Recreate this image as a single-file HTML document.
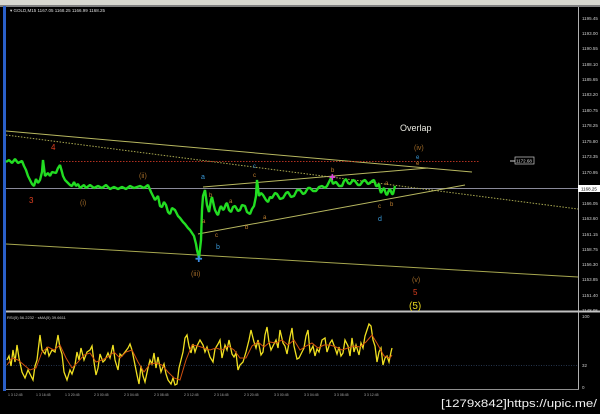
<!DOCTYPE html>
<html><head><meta charset="utf-8"><style>
html,body{margin:0;padding:0;background:#000;width:600px;height:414px;overflow:hidden}
svg{display:block}
text{font-family:"Liberation Sans",sans-serif}
</style></head><body>
<svg width="600" height="414" viewBox="0 0 600 414" xmlns="http://www.w3.org/2000/svg">
<rect width="600" height="414" fill="#000"/>
<rect x="0" y="0" width="600" height="5" fill="#d8d8d0"/>
<rect x="0" y="5" width="600" height="2" fill="#808080"/>
<rect x="3" y="6" width="3" height="385" fill="#2a5fc8"/>
<line x1="578.5" y1="7" x2="578.5" y2="390" stroke="#b0b0b0" stroke-width="1"/>
<line x1="6" y1="311.5" x2="600" y2="311.5" stroke="#c0c0c0" stroke-width="2"/>
<line x1="6" y1="389.5" x2="579" y2="389.5" stroke="#909090" stroke-width="1"/>
<text x="10" y="12" font-size="4.5" fill="#ddd">▾ GOLD,M15  1167.05 1168.25 1166.99 1168.25</text>
<g font-size="4.5" fill="#ccc">
<text x="582" y="20">1195.45</text><text x="582" y="35">1193.00</text><text x="582" y="50">1190.55</text>
<text x="582" y="66">1188.10</text><text x="582" y="81">1185.65</text><text x="582" y="96">1183.20</text>
<text x="582" y="112">1180.75</text><text x="582" y="127">1178.25</text><text x="582" y="143">1175.80</text>
<text x="582" y="158">1173.35</text><text x="582" y="174">1170.95</text>
<text x="582" y="205">1166.05</text><text x="582" y="220">1163.60</text><text x="582" y="236">1161.15</text>
<text x="582" y="251">1158.75</text><text x="582" y="266">1156.30</text><text x="582" y="281">1153.85</text>
<text x="582" y="297">1151.40</text><text x="582" y="312">1148.95</text>
<text x="582" y="318">100</text><text x="582" y="367">32</text><text x="582" y="389">0</text>
</g>
<line x1="6" y1="188.5" x2="578" y2="188.5" stroke="#8a8a9a" stroke-width="1"/>
<rect x="578" y="185" width="22" height="7" fill="#fff"/>
<text x="581" y="190.5" font-size="4.5" fill="#000">1168.25</text>
<line x1="6" y1="131" x2="472" y2="172" stroke="#b8b860" stroke-width="1"/>
<line x1="6" y1="135" x2="578" y2="209" stroke="#a8a850" stroke-width="1" stroke-dasharray="1.5,1.5"/>
<line x1="60" y1="161.5" x2="480" y2="161.5" stroke="#b03020" stroke-width="1" stroke-dasharray="1.5,1.5"/>
<line x1="203" y1="187" x2="428" y2="168" stroke="#b8b860" stroke-width="1"/>
<line x1="198" y1="234" x2="465" y2="185" stroke="#b8b860" stroke-width="1"/>
<line x1="6" y1="244" x2="578" y2="277" stroke="#a8a850" stroke-width="1"/>
<line x1="510" y1="161" x2="515" y2="161" stroke="#ccc"/>
<rect x="515" y="157" width="19" height="7" fill="#000" stroke="#ccc" stroke-width="0.7"/>
<text x="516" y="162.5" font-size="4.5" fill="#ddd">1172.68</text>
<polyline fill="none" stroke="#22dd22" stroke-width="2.4" stroke-linejoin="bevel" points="6,162 9,160 12,163 15,159 18,163 22,161 24,166 26,170 28,176 30,180 32,184 34,186 36,179 38,183 40,180 42,172 43,160 45,176 48,173 50,176 52,172 56,173 58,168 60,165 62,172 63,176 65,180 67,182 70,185 72,186 74,182 76,186 78,184 80,188 84,185 86,188 90,185 94,188 98,186 102,188 106,185 110,189 114,187 118,189 122,187 126,189 130,186 134,188 140,186 144,188 148,185 151,192 153,196 155,200 158,196 160,206 162,207 164,202 166,205 168,212 170,214 172,208 175,210 178,216 180,218 183,222 185,224 188,228 190,230 192,233 194,236 196,244 197,250 199,258 201,240 202,210 203,196 205,190 207,205 209,212 211,200 212,197 214,206 215,210 217,214 218,215 220,208 221,206 223,210 224,209 226,204 227,203 229,210 231,212 233,207 235,206 238,211 240,210 242,205 245,206 247,212 250,214 252,209 254,206 256,196 257,180 259,196 261,193 263,195 266,200 268,202 270,197 272,198 275,193 277,194 280,199 283,198 286,193 288,192 291,197 294,196 297,190 300,190 303,194 305,193 308,188 310,188 313,191 316,191 319,187 322,186 325,188 327,186 329,182 331,178 333,184 334,183 336,182 339,186 342,186 344,181 346,179 348,183 350,184 353,180 355,181 358,185 360,185 363,181 365,180 368,184 370,183 372,181 374,180 376,186 377,186 379,184 380,190 381,193 383,189 384,188 386,194 387,195 389,190 390,189 392,194 393,194 395,186"/>
<text x="195" y="262" font-size="9" fill="#3a8ae0">✚</text>
<text x="329" y="180" font-size="8" fill="#e040e0">✚</text>
<g font-size="7">
<text x="51" y="150" fill="#e04020" font-size="8">4</text>
<text x="29" y="203" fill="#e04020" font-size="8">3</text>
<text x="80" y="205" fill="#a06a28">(i)</text>
<text x="139" y="178" fill="#a06a28">(ii)</text>
<text x="191" y="276" fill="#a06a28">(iii)</text>
<text x="201" y="179" fill="#3a9ad9">a</text>
<text x="209" y="197" fill="#c08030" font-size="6">b</text>
<text x="202" y="223" fill="#c08030" font-size="6">a</text>
<text x="215" y="237" fill="#c08030" font-size="6">c</text>
<text x="216" y="249" fill="#3a9ad9">b</text>
<text x="229" y="203" fill="#c08030" font-size="6">a</text>
<text x="245" y="229" fill="#c08030" font-size="6">b</text>
<text x="253" y="168" fill="#3a9ad9" font-size="6">c</text>
<text x="253" y="177" fill="#c08030" font-size="6">c</text>
<text x="263" y="219" fill="#c08030" font-size="6">a</text>
<text x="331" y="172" fill="#c08030" font-size="6">b</text>
<text x="385" y="185" fill="#c08030" font-size="6">a</text>
<text x="378" y="208" fill="#c08030" font-size="6">c</text>
<text x="390" y="206" fill="#c08030" font-size="6">b</text>
<text x="378" y="221" fill="#3a9ad9">d</text>
<text x="414" y="150" fill="#a06a28">(iv)</text>
<text x="416" y="159" fill="#3a9ad9" font-size="6">e</text>
<text x="416" y="165" fill="#c08030" font-size="6">e</text>
<text x="412" y="282" fill="#a06a28">(v)</text>
<text x="413" y="295" fill="#e04020" font-size="8">5</text>
<text x="409" y="309" fill="#e8d820" font-size="10">(5)</text>
</g>
<text x="400" y="131" font-size="9" fill="#e8e8e0">Overlap</text>
<text x="7" y="319" font-size="4" fill="#ccc">RSI(5) 56.2232 · sMA(5) 39.6611</text>
<line x1="6" y1="365.5" x2="578" y2="365.5" stroke="#4a6a9a" stroke-width="0.6" stroke-dasharray="1,1.5"/>
<polyline fill="none" stroke="#f0e020" stroke-width="1.3" points="7,360 9,356 11,366 13,350 15,362 17,345 19,358 22,372 25,378 28,370 31,376 33,380 35,366 37,360 40,335 42,350 45,354 47,347 49,356 52,350 55,352 58,335 60,348 62,354 64,372 67,380 70,370 72,374 75,365 77,352 79,360 81,348 84,360 87,352 90,350 92,346 94,362 96,375 98,368 100,354 103,362 105,360 108,353 110,358 113,345 115,360 118,370 120,354 122,356 125,352 128,348 130,344 132,350 134,360 137,375 139,384 141,366 143,376 145,382 148,368 150,360 152,364 154,353 156,368 158,357 161,372 164,364 166,374 168,380 171,384 173,378 175,385 177,384 179,368 181,360 183,352 185,338 187,335 189,346 191,353 193,344 195,352 197,346 200,340 203,345 205,352 207,347 210,357 213,362 215,349 218,344 220,340 222,358 225,345 227,350 229,340 232,354 234,357 236,353 238,370 240,365 243,362 246,352 249,340 251,330 254,342 256,348 258,340 261,355 263,352 265,335 267,327 269,342 271,350 274,344 276,340 278,348 280,330 283,343 285,346 287,354 290,337 292,328 294,346 297,359 299,358 302,352 304,348 306,336 308,330 310,352 313,346 315,356 317,349 319,352 322,340 325,338 327,352 330,343 332,340 335,348 337,354 339,347 341,356 343,353 345,340 348,346 350,356 352,338 354,352 356,345 359,355 361,343 363,348 365,336 367,330 369,324 371,326 373,340 375,346 377,362 379,352 381,348 383,365 385,358 387,356 389,362 391,352 392,348"/>
<polyline fill="none" stroke="#d05010" stroke-width="1" points="7,365 12,358 18,360 24,365 30,370 36,368 42,352 48,347 54,350 60,345 66,358 72,368 78,362 84,355 90,353 96,362 102,360 108,357 114,352 120,358 126,352 132,350 138,362 144,372 150,364 156,363 162,365 168,372 174,378 180,380 186,360 192,345 198,346 204,348 210,350 216,348 222,350 228,346 234,350 240,358 246,358 252,346 258,342 264,347 270,342 276,343 282,340 288,345 294,340 300,350 306,346 312,343 318,348 324,345 330,345 336,347 342,350 348,348 354,346 360,347 366,342 372,335 378,345 384,356 390,358 392,355"/>
<g font-size="3.5" fill="#aaa">
<text x="8" y="396">1 3 12:45</text><text x="36" y="396">1 3 16:45</text><text x="65" y="396">1 3 20:45</text>
<text x="94" y="396">2 3 00:45</text><text x="124" y="396">2 3 04:45</text><text x="154" y="396">2 3 08:45</text>
<text x="184" y="396">2 3 12:45</text><text x="214" y="396">2 3 16:45</text><text x="244" y="396">2 3 20:45</text>
<text x="274" y="396">3 3 00:45</text><text x="304" y="396">3 3 04:45</text><text x="334" y="396">3 3 08:45</text>
<text x="364" y="396">3 3 12:45</text>
</g>
<text x="441" y="407" font-size="11" fill="#f0f0f0" textLength="156" lengthAdjust="spacingAndGlyphs" font-family="DejaVu Sans Condensed, Liberation Sans, sans-serif">[1279x842]https://upic.me/</text>
</svg>
</body></html>
